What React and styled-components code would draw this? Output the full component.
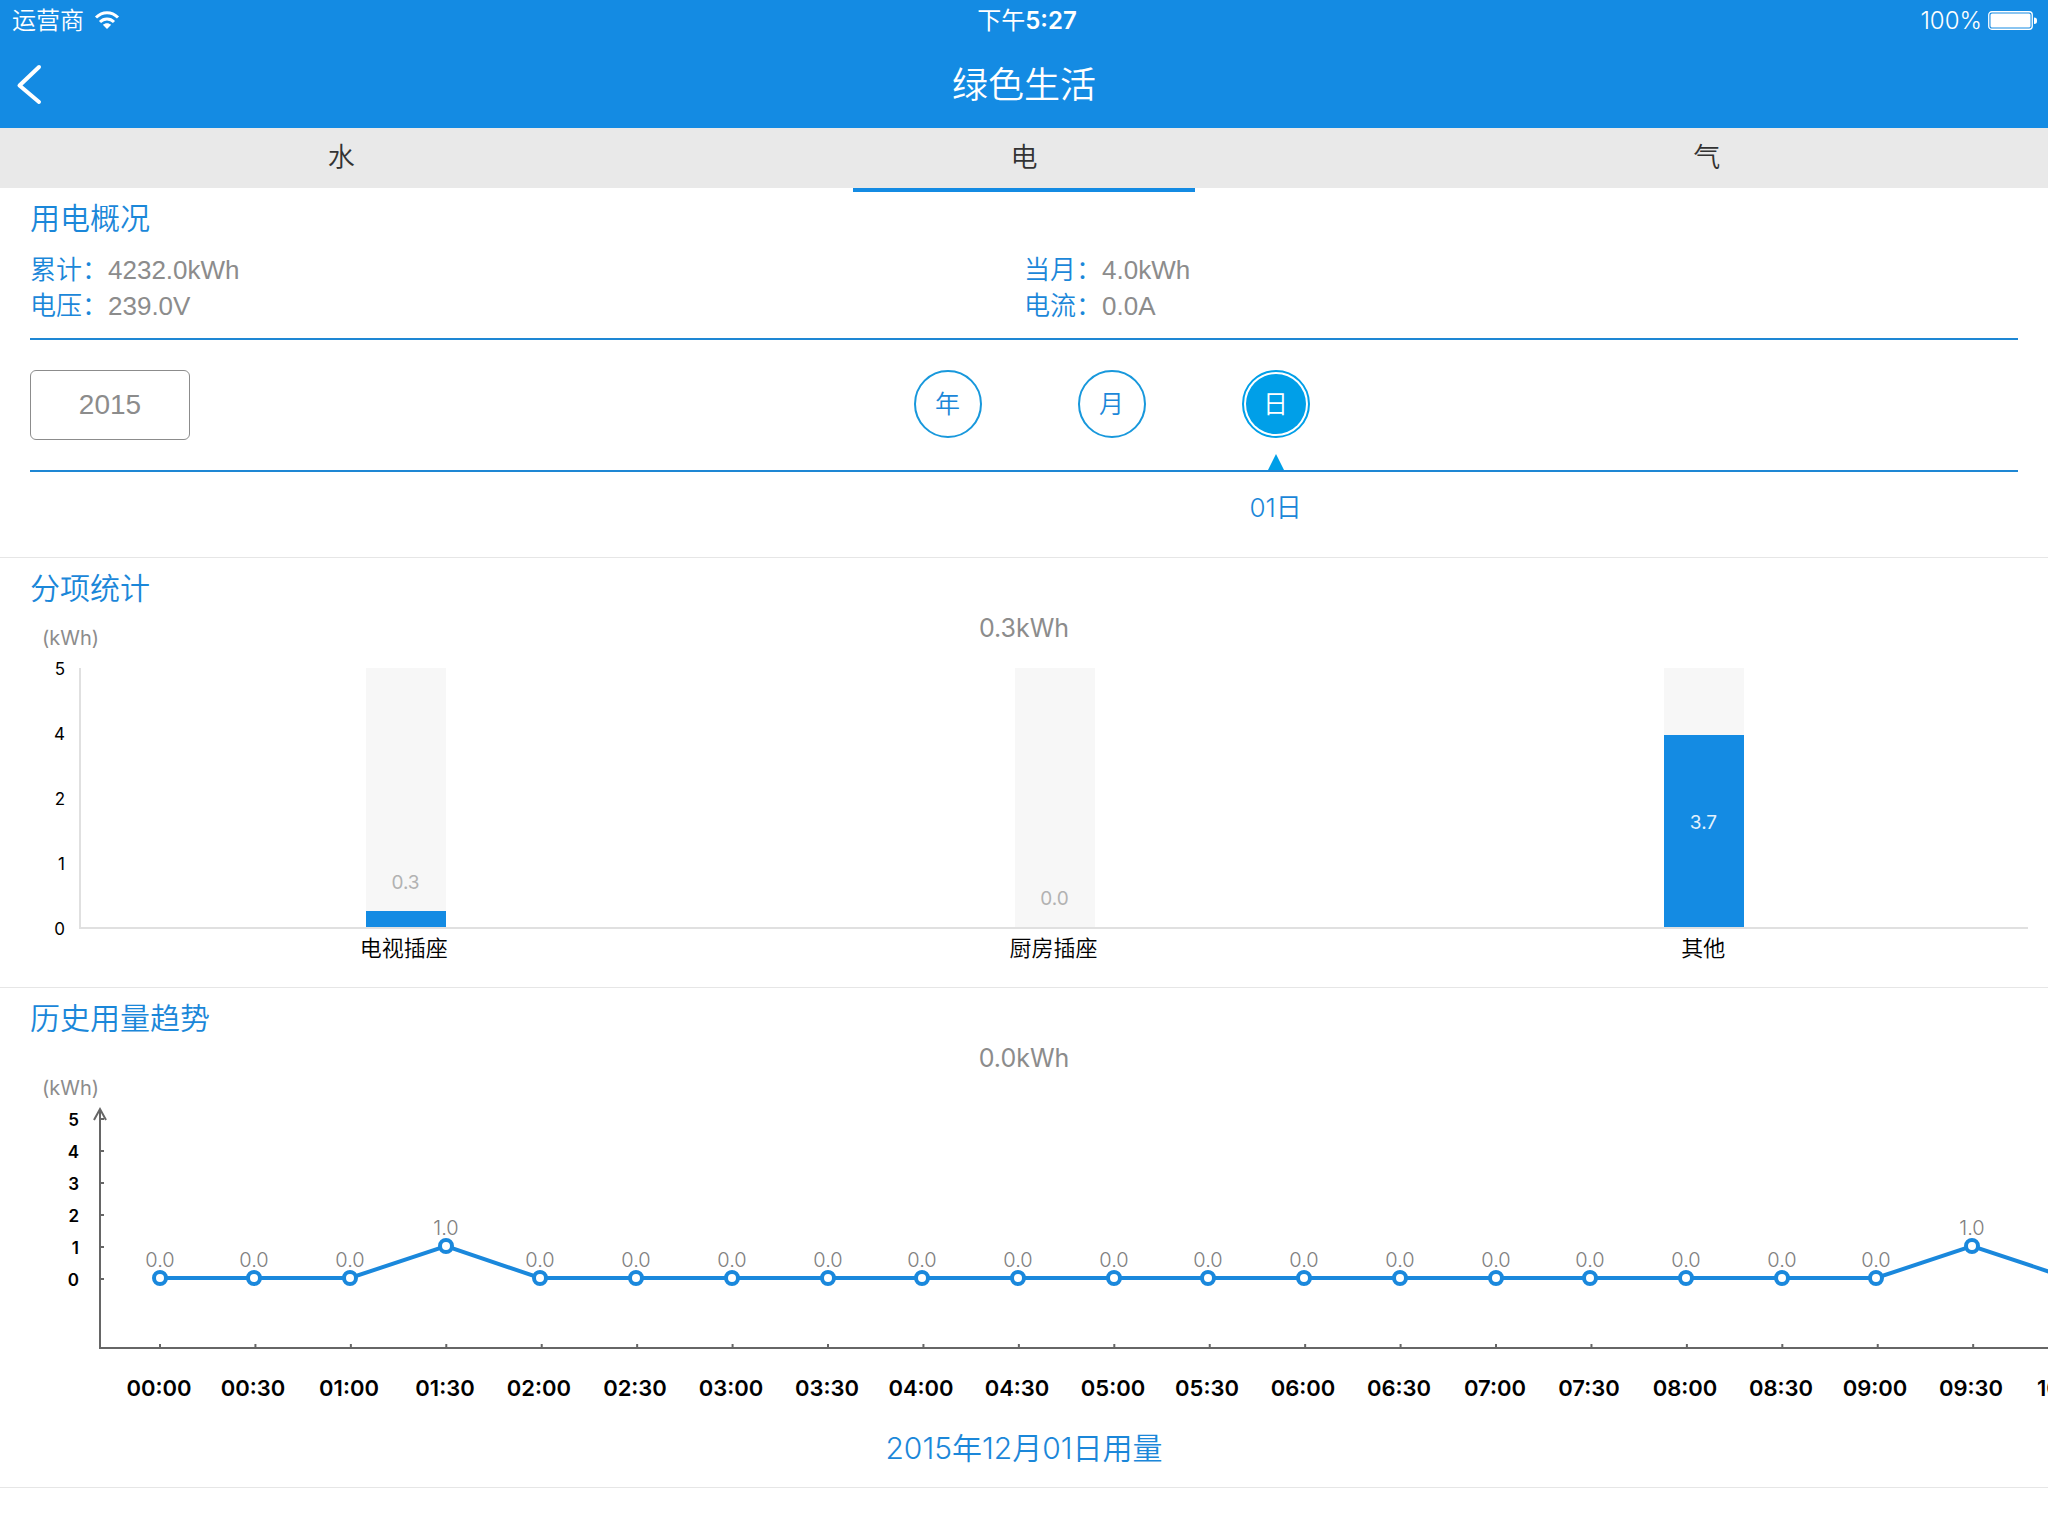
import React, { useState } from 'react';
import styled, { createGlobalStyle } from 'styled-components';

const GlobalStyle = createGlobalStyle`
  * {
    box-sizing: border-box;
  }
  body {
    margin: 0;
    background-color: #ffffff;
    font-family: Inter, 'Noto Sans CJK SC', sans-serif;
    font-weight: 350;
    overflow-x: hidden;
  }
  button {
    font-family: inherit;
    font-weight: inherit;
    padding: 0;
    border: none;
    background: none;
    cursor: pointer;
  }
`;

//Header
const Header = styled.header`
  background-color: #148be3;
  color: #ffffff;
`;
const StatusBar = styled.div`
  display: grid;
  grid-template-columns: 1fr auto 1fr;
  align-items: center;
  height: 40px;
  padding: 2px 10px 0 12px;
  font-size: 24px;
  line-height: 38px;
`;
const StatusGroup = styled.div`
  display: flex;
  align-items: center;
  justify-content: ${props => props.$end ? 'flex-end' : 'flex-start'};
  gap: ${props => props.$end ? '6px' : '10px'};
`;
const Clock = styled.time`
  padding-left: 4px;
  font-weight: 400;
`;
const ClockDigits = styled.span`
  font-weight: 600;
`;
const NavBar = styled.div`
  display: grid;
  grid-template-columns: 1fr auto 1fr;
  align-items: center;
  height: 88px;
`;
const BackButton = styled.button`
  display: flex;
  width: 60px;
  height: 88px;
`;
const PageTitle = styled.h1`
  margin: 0;
  padding-top: 2px;
  font-size: 36px;
  line-height: 86px;
  font-weight: 350;
`;

//Tabs
const Tabs = styled.nav`
  display: flex;
  background-color: #e9e9e9;
`;
const Tab = styled.button`
  position: relative;
  flex: 1;
  height: 60px;
  color: #333333;
  font-size: 27px;
  line-height: 56px;

  &::after {
    content: '';
    display: ${props => props.$active ? 'block' : 'none'};
    position: absolute;
    top: 100%;
    left: 25%;
    width: 50%;
    height: 4px;
    background-color: #148be3;
  }
`;

//Sections
const Section = styled.section`
  padding-top: 10px;
  border-bottom: 1px solid #e6e6e6;
`;
const SectionTitle = styled.h2`
  margin: 0;
  padding: 0 30px;
  color: #1b87d9;
  font-size: 30px;
  line-height: 40px;
  font-weight: 350;
`;
const Stats = styled.dl`
  display: grid;
  grid-template-columns: 1fr 1fr;
  margin: 14px 30px 0;
  padding-bottom: 14px;
  border-bottom: 2px solid #1e87d4;
  font-size: 26px;
  line-height: 36px;
`;
const Stat = styled.div`
  display: flex;
`;
const StatLabel = styled.dt`
  color: #1b87d9;
`;
const StatValue = styled.dd`
  margin: 0;
  color: #8c8c8c;
  font-family: 'Liberation Sans', sans-serif;
  font-weight: 400;
`;

//Date picker
const PickerRow = styled.div`
  display: grid;
  grid-template-columns: 4fr 5fr;
  margin: 0 30px;
  padding-top: ${props => props.$lined ? '30px' : '0'};
  border-bottom: ${props => props.$lined ? '2px solid #1e87d4' : 'none'};
`;
const YearButton = styled.button`
  width: 160px;
  height: 70px;
  border: 1px solid #8c8c8c;
  border-radius: 6px;
  color: #8c8c8c;
  font-family: 'Liberation Sans', sans-serif;
  font-size: 28px;
  font-weight: 400;
`;
const Periods = styled.div`
  grid-column: 2;
  display: flex;
  gap: 96px;
`;
const Period = styled.div`
  display: flex;
  flex-direction: column;
  align-items: center;
  justify-content: space-between;
  height: 100px;
`;
const PeriodButton = styled.button`
  width: 68px;
  height: 68px;
  padding: 2px;
  border: 2px solid ${props => props.$active ? '#009fe8' : '#1898dc'};
  border-radius: 50%;
  background-color: ${props => props.$active ? '#009fe8' : 'transparent'};
  background-clip: content-box;
  color: ${props => props.$active ? '#ffffff' : '#1b87d9'};
  font-size: 25px;
  line-height: 60px;
`;
const Marker = styled.span`
  border: 8px solid transparent;
  border-top: none;
  border-bottom: 16px solid #009fe8;
`;
const PeriodValue = styled.span`
  width: 68px;
  padding: 18px 0 32px;
  color: #1b87d9;
  font-size: 26px;
  line-height: 35px;
  text-align: center;
  white-space: nowrap;
`;

//Charts
const ChartHead = styled.div`
  display: grid;
  grid-template-columns: 1fr auto 1fr;
  align-items: end;
`;
const Total = styled.div`
  grid-column: 2;
  color: #8c8c8c;
  font-size: 25px;
  font-weight: 400;
  line-height: 40px;
`;
const Unit = styled.div`
  padding-left: 42px;
  color: #8c8c8c;
  font-size: 20px;
  font-weight: 400;
  line-height: 20px;
`;
const BarChart = styled.div`
  display: grid;
  grid-template-columns: 79px 1fr;
  padding: 10px 20px 0 0;
`;
const Scale = styled.div`
  display: flex;
  flex-direction: column;
  justify-content: space-between;
  height: 281px;
  margin: 1px 0 -11px;
  padding-right: 14px;
  color: #000000;
  font-size: 17px;
  line-height: 21px;
  font-weight: 400;
  text-align: right;
`;
const Plot = styled.div`
  display: flex;
  height: 261px;
  margin-top: 10px;
  border-left: 2px solid #e0e0e0;
  border-bottom: 2px solid #e0e0e0;
`;
const Slot = styled.div`
  flex: 1;
  display: flex;
  justify-content: center;
`;
const Track = styled.div`
  display: flex;
  flex-direction: column;
  justify-content: flex-end;
  width: 80px;
  background-color: #f7f7f7;
`;
const BarValue = styled.div`
  margin-bottom: ${props => props.$inside ? '16px' : '18px'};
  color: ${props => props.$inside ? '#e4f2fd' : '#b2b2b2'};
  font-size: 19px;
  line-height: 20px;
  font-weight: 400;
  text-align: center;
`;
const Bar = styled.div`
  display: flex;
  align-items: center;
  justify-content: center;
  background-color: #148be3;
`;
const Categories = styled.div`
  grid-column: 2;
  display: flex;
  padding: 4px 0 24px;
`;
const Category = styled.div`
  flex: 1;
  color: #000000;
  font-size: 22px;
  line-height: 30px;
  text-align: center;
`;
const TrendSvg = styled.svg`
  display: block;
  width: 100%;
  height: 310px;
  overflow: hidden;
`;
const ScaleText = styled.text`
  font-size: 17px;
  font-weight: 600;
  text-anchor: end;
`;
const TimeText = styled.text`
  font-size: 22px;
  font-weight: 600;
  text-anchor: middle;
`;
const ValueText = styled.text`
  fill: #808080;
  font-size: 20px;
  font-weight: 300;
  text-anchor: middle;
`;
const Caption = styled.p`
  margin: 0;
  padding: 20px 0 19px;
  color: #1b87d9;
  font-size: 30px;
  line-height: 40px;
  text-align: center;
`;

const tabs = ['水', '电', '气'];
const periods = [
    { name: '年', value: '2015年' },
    { name: '月', value: '12月' },
    { name: '日', value: '01日' },
];
const stats = [
    { label: '累计：', value: '4232.0kWh' },
    { label: '当月：', value: '4.0kWh' },
    { label: '电压：', value: '239.0V' },
    { label: '电流：', value: '0.0A' },
];
const sockets = [
    { name: '电视插座', value: 0.3 },
    { name: '厨房插座', value: 0 },
    { name: '其他', value: 3.7 },
];
const trend = [0, 0, 0, 1, 0, 0, 0, 0, 0, 0, 0, 0, 0, 0, 0, 0, 0, 0, 0, 1, 0];

const MAX = 5;
const STEP = 95.43;

const timeLabel = (i) => {
    const hour = String(Math.floor(i / 2)).padStart(2, '0');
    return `${hour}:${i % 2 ? '30' : '00'}`;
}

function SocketChart(){
    return (
        <BarChart>
            <Scale>
                {['5', '4', '2', '1', '0'].map(n => <span key={n}>{n}</span>)}
            </Scale>
            <Plot>
                {sockets.map(({ name, value }) => {
                    const inside = value > 1;
                    return (
                        <Slot key={name}>
                            <Track>
                                {!inside && <BarValue>{value.toFixed(1)}</BarValue>}
                                <Bar style={{ height: `${value / MAX * 100}%` }}>
                                    {inside && <BarValue $inside>{value.toFixed(1)}</BarValue>}
                                </Bar>
                            </Track>
                        </Slot>
                    )
                })}
            </Plot>
            <Categories>
                {sockets.map(({ name }) => <Category key={name}>{name}</Category>)}
            </Categories>
        </BarChart>
    )
}

function TrendChart(){
    // points snap to whole points on a 2x screen, ticks do not
    const points = trend.map((value, i) => ({
        value,
        tick: 160 + i * STEP,
        x: Math.floor((160 + i * STEP) / 2) * 2,
        y: 180 - value * 32,
    }));

    return (
        <TrendSvg role="img" aria-label="历史用量趋势">
            <g stroke="#666666" strokeWidth="2" fill="none">
                <path d="M100 11V250H4000" />
                <path d="M94 22L100 11L106 22" />
                {[0, 1, 2, 3, 4, 5].map(n => (
                    <path key={n} d={`M100 ${181 - n * 32}h4`} />
                ))}
                {points.map(({ tick }) => (
                    <path key={tick} d={`M${tick} 250v-4`} />
                ))}
            </g>
            {[0, 1, 2, 3, 4, 5].map(n => (
                <ScaleText key={n} x="79" y={188 - n * 32}>{n}</ScaleText>
            ))}
            <polyline
                points={points.map(({ x, y }) => `${x},${y}`).join(' ')}
                fill="none"
                stroke="#1a88dc"
                strokeWidth="4"
            />
            {points.map(({ x, y, value }, i) => (
                <g key={x}>
                    <circle cx={x} cy={y} r="6" fill="#ffffff" stroke="#1a88dc" strokeWidth="4" />
                    <ValueText x={x} y={y - 11}>{value.toFixed(1)}</ValueText>
                    <TimeText x={x - 1} y="298">{timeLabel(i)}</TimeText>
                </g>
            ))}
        </TrendSvg>
    )
}

function App(){
    const [activeTab, setActiveTab] = useState('电');
    const [activePeriod, setActivePeriod] = useState('日');

    return (
        <>
            <GlobalStyle />
            <Header>
                <StatusBar>
                    <StatusGroup>
                        <span>运营商</span>
                        <svg width="26" height="20" viewBox="0 1 26 20" fill="none" stroke="#ffffff" strokeWidth="3">
                            <path d="M2 7.5C8.500 1 17.500 1 24 7.500" />
                            <path d="M6 12C10 8 16 8 20 12" />
                            <path d="M13 19L8.800 14.800C11.300 12.700 14.700 12.700 17.200 14.800Z" fill="#ffffff" stroke="none" />
                        </svg>
                    </StatusGroup>
                    <Clock>下午<ClockDigits>5:27</ClockDigits></Clock>
                    <StatusGroup $end>
                        <span>100%</span>
                        <svg width="50" height="20" viewBox="0 1 50 20">
                            <rect x="0.750" y="1.750" width="43.500" height="17.500" rx="3" fill="none" stroke="#ffffff" strokeWidth="1.300" />
                            <rect x="2.500" y="3.500" width="40" height="14" rx="1.500" fill="#ffffff" />
                            <path d="M46 7.500C48.300 7.500 49 8.500 49 10.700S48.300 14 46 14Z" fill="#ffffff" />
                        </svg>
                    </StatusGroup>
                </StatusBar>
                <NavBar>
                    <BackButton aria-label="返回">
                        <svg width="60" height="88" viewBox="0 0 60 88" fill="none" stroke="#ffffff" strokeWidth="4" strokeLinecap="round" strokeLinejoin="round">
                            <path d="M39 27L19.500 45.500L39 62" />
                        </svg>
                    </BackButton>
                    <PageTitle>绿色生活</PageTitle>
                </NavBar>
            </Header>
            <Tabs>
                {tabs.map(tab => (
                    <Tab key={tab} $active={tab === activeTab} onClick={() => setActiveTab(tab)}>{tab}</Tab>
                ))}
            </Tabs>
            <main>
                <Section>
                    <SectionTitle>用电概况</SectionTitle>
                    <Stats>
                        {stats.map(({ label, value }) => (
                            <Stat key={label}>
                                <StatLabel>{label}</StatLabel>
                                <StatValue>{value}</StatValue>
                            </Stat>
                        ))}
                    </Stats>
                    <PickerRow $lined>
                        <YearButton>2015</YearButton>
                        <Periods>
                            {periods.map(({ name }) => (
                                <Period key={name}>
                                    <PeriodButton $active={name === activePeriod} onClick={() => setActivePeriod(name)}>{name}</PeriodButton>
                                    {name === activePeriod && <Marker />}
                                </Period>
                            ))}
                        </Periods>
                    </PickerRow>
                    <PickerRow>
                        <Periods>
                            {periods.map(({ name, value }) => (
                                <PeriodValue key={name}>{name === activePeriod && value}</PeriodValue>
                            ))}
                        </Periods>
                    </PickerRow>
                </Section>
                <Section>
                    <SectionTitle>分项统计</SectionTitle>
                    <ChartHead>
                        <Unit>(kWh)</Unit>
                        <Total>0.3kWh</Total>
                    </ChartHead>
                    <SocketChart />
                </Section>
                <Section>
                    <SectionTitle>历史用量趋势</SectionTitle>
                    <ChartHead>
                        <Total>0.0kWh</Total>
                    </ChartHead>
                    <Unit>(kWh)</Unit>
                    <TrendChart />
                    <Caption>2015年12月01日用量</Caption>
                </Section>
            </main>
        </>
    )
}

export default App;
